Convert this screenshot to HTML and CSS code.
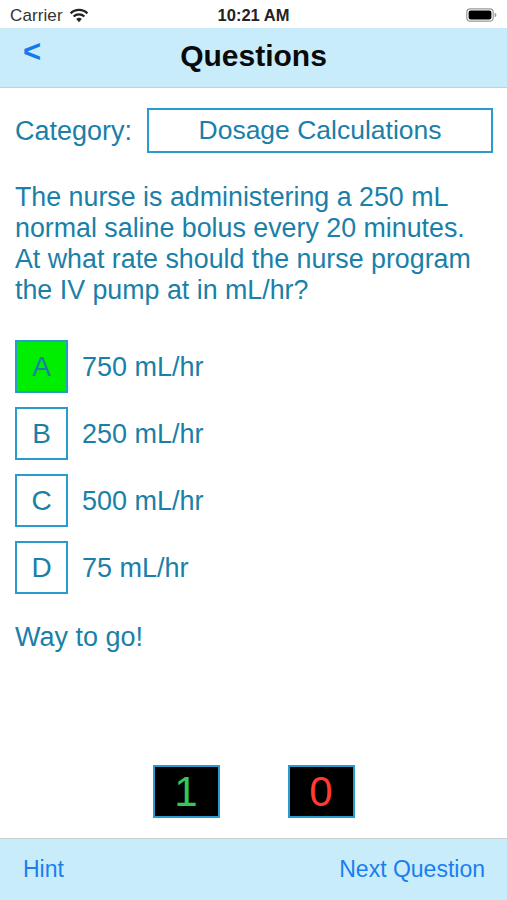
FILE: index.html
```html
<!DOCTYPE html>
<html>
<head>
<meta charset="utf-8">
<link rel="stylesheet" href="styles.css">
</head>
<body>
<div class="screen">
  <div class="status">
    <div class="status-left">
      <span class="carrier">Carrier</span>
      <svg class="wifi" width="20" height="15" viewBox="0 0 20 15">
        <path d="M10 14.2 L7.2 11.1 A4.2 4.2 0 0 1 12.8 11.1 Z" fill="#222"/>
        <path d="M4.6 8.5 A7.8 7.8 0 0 1 15.4 8.5" fill="none" stroke="#222" stroke-width="2.2"/>
        <path d="M1.6 5.4 A12 12 0 0 1 18.4 5.4" fill="none" stroke="#222" stroke-width="2.2"/>
      </svg>
    </div>
    <div class="time">10:21 AM</div>
    <div class="status-right">
      <svg class="battery" width="31" height="14" viewBox="0 0 31 14">
        <rect x="0.8" y="0.8" width="26.4" height="12.4" rx="3.5" fill="none" stroke="#9a9a9a" stroke-width="1.2"/>
        <rect x="2.6" y="2.6" width="22.8" height="8.8" rx="2" fill="#000"/>
        <path d="M28.6 4.8 Q30.4 5.2 30.4 7 Q30.4 8.8 28.6 9.2 Z" fill="#9a9a9a"/>
      </svg>
    </div>
  </div>
  <div class="navbar">
    <span class="back">&lt;</span>
    <span class="title">Questions</span>
  </div>
  <div class="content">
    <div class="category-row">
      <span class="category-label">Category:</span>
      <div class="category-box">Dosage Calculations</div>
    </div>
    <p class="question">The nurse is administering a 250 mL normal saline bolus every 20 minutes. At what rate should the nurse program the IV pump at in mL/hr?</p>
    <div class="answers">
      <div class="answer"><div class="letter correct">A</div><span class="answer-text">750 mL/hr</span></div>
      <div class="answer"><div class="letter">B</div><span class="answer-text">250 mL/hr</span></div>
      <div class="answer"><div class="letter">C</div><span class="answer-text">500 mL/hr</span></div>
      <div class="answer"><div class="letter">D</div><span class="answer-text">75 mL/hr</span></div>
    </div>
    <p class="feedback">Way to go!</p>
    <div class="scores">
      <div class="score right">1</div>
      <div class="score wrong">0</div>
    </div>
  </div>
  <div class="toolbar">
    <span class="tool">Hint</span>
    <span class="tool">Next Question</span>
  </div>
</div>
</body>
</html>
```
FILE: styles.css
```css
html, body {
  margin: 0;
  padding: 0;
  background: #fff;
}
.screen {
  width: 507px;
  height: 900px;
  display: flex;
  flex-direction: column;
  font-family: "Liberation Sans", Arial, sans-serif;
  overflow: hidden;
}
.status {
  height: 28px;
  display: flex;
  align-items: center;
  justify-content: space-between;
  padding: 3px 10px 0 10px;
  box-sizing: border-box;
  color: #333;
  font-size: 17px;
}
.status-left {
  display: flex;
  align-items: center;
  gap: 6px;
  width: 120px;
}
.carrier {
  letter-spacing: 0.1px;
}
.wifi {
  margin-top: -1px;
}
.time {
  font-weight: bold;
  color: #222;
  font-size: 16.5px;
}
.status-right {
  width: 120px;
  display: flex;
  justify-content: flex-end;
}
.battery {
  margin-top: -1px;
}
.navbar {
  height: 59px;
  background: #c9ecfb;
  border-bottom: 1px solid #c6d0d4;
  display: flex;
  align-items: center;
  justify-content: center;
  position: relative;
}
.back {
  position: absolute;
  left: 23px;
  top: 6px;
  color: #1479ee;
  font-weight: bold;
  font-size: 31px;
}
.title {
  font-weight: bold;
  font-size: 30px;
  color: #0a0a0a;
  margin-top: -3px;
}
.content {
  flex: 1;
  display: flex;
  flex-direction: column;
  padding: 20px 14px 0 15px;
  color: #1a80a8;
  font-size: 27px;
}
.category-row {
  display: flex;
  align-items: center;
  gap: 15px;
}
.category-label {
  margin-top: 2px;
}
.category-box {
  flex: 1;
  height: 45px;
  box-sizing: border-box;
  border: 2px solid #2a9bcf;
  display: flex;
  align-items: center;
  justify-content: center;
  font-size: 26.5px;
}
.question {
  margin: 29px 0 0 0;
  line-height: 31px;
  font-size: 26.8px;
}
.answers {
  margin-top: 34px;
  display: flex;
  flex-direction: column;
  gap: 14px;
}
.answer {
  display: flex;
  align-items: center;
  gap: 14px;
}
.answer-text {
  margin-top: 2px;
}
.letter {
  width: 53px;
  height: 53px;
  box-sizing: border-box;
  border: 2px solid #2a9bcf;
  display: flex;
  align-items: center;
  justify-content: center;
  font-size: 28px;
}
.letter.correct {
  background: #00ee00;
}
.feedback {
  margin: 28px 0 0 0;
  line-height: 31px;
}
.scores {
  margin-top: auto;
  margin-bottom: 20px;
  display: flex;
  justify-content: center;
  gap: 68px;
  margin-left: -1px;
}
.score {
  width: 67px;
  height: 53px;
  box-sizing: border-box;
  background: #000;
  border: 2px solid #2a9bcf;
  display: flex;
  align-items: center;
  justify-content: center;
  font-size: 42px;
}
.score.right {
  color: #35c759;
}
.score.wrong {
  color: #ff3b30;
}
.toolbar {
  height: 62px;
  box-sizing: border-box;
  border-top: 1px solid #c6d0d4;
  background: #c9ecfb;
  display: flex;
  align-items: center;
  justify-content: space-between;
  padding: 0 22px 0 23px;
  color: #1a7ef0;
  font-size: 23px;
}
```
